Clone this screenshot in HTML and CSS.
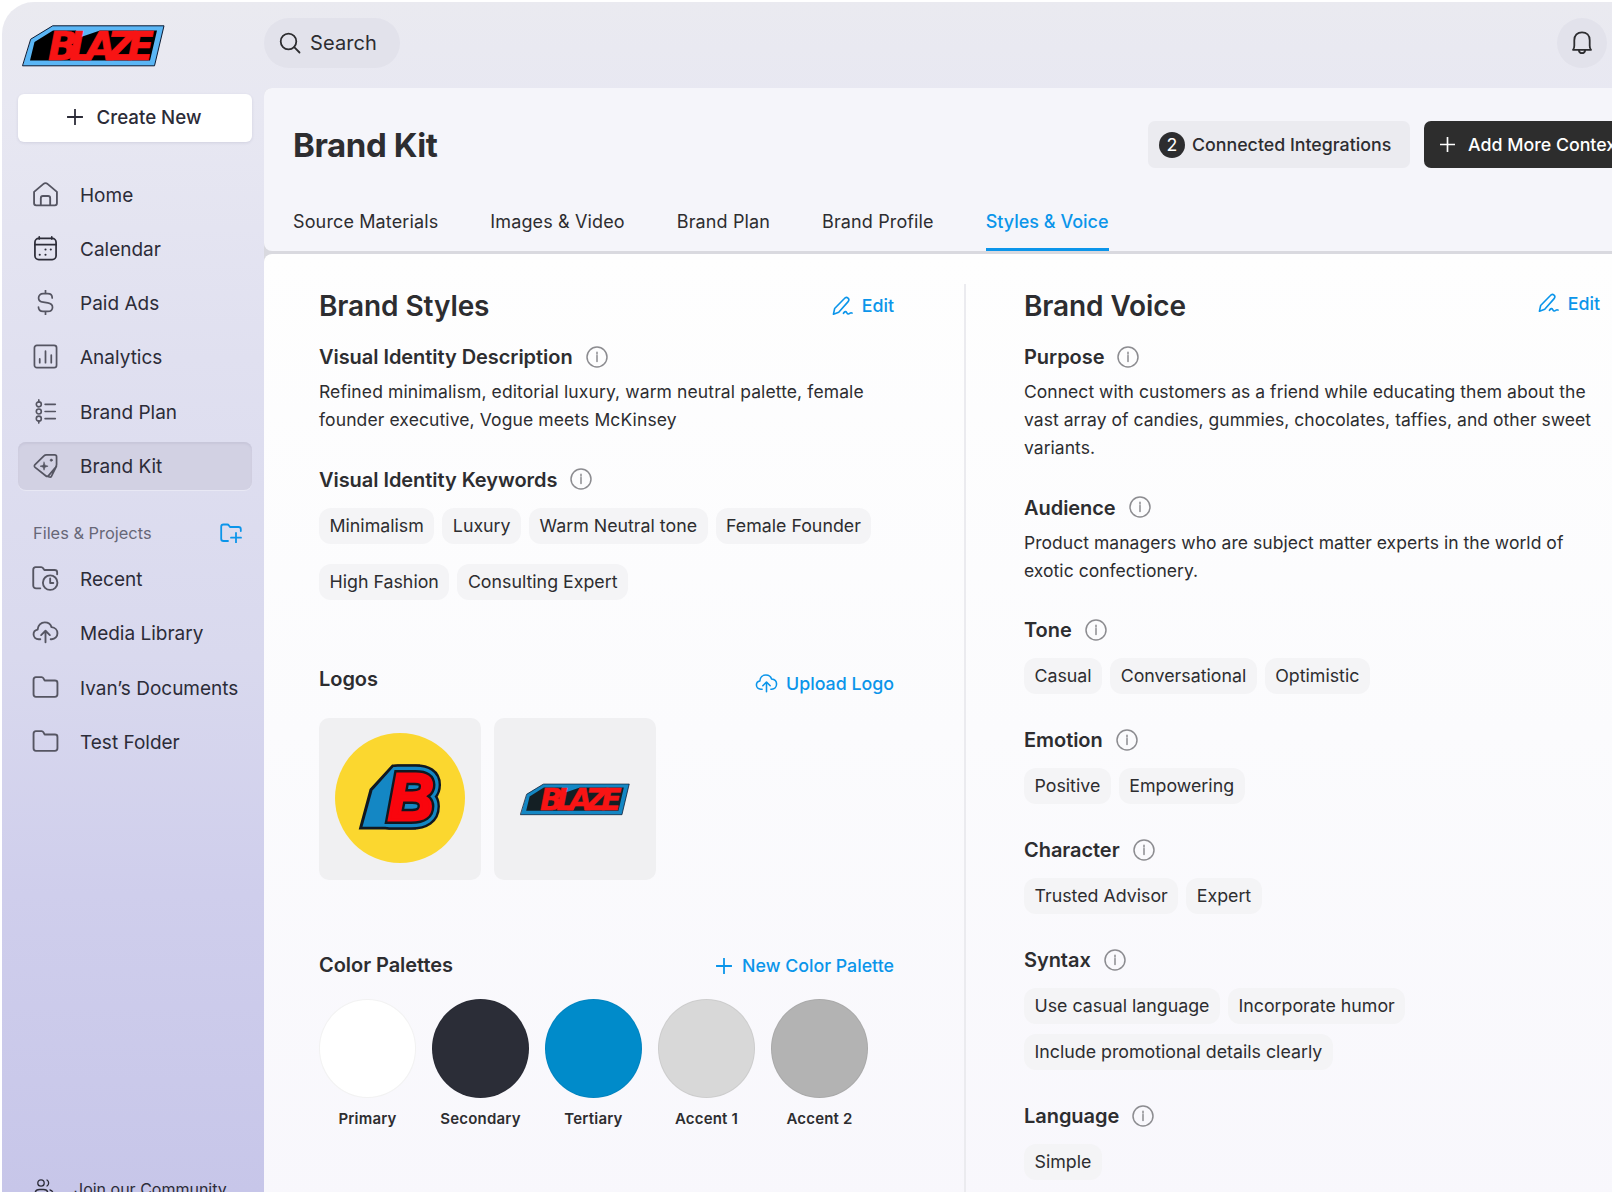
FILE: index.html
```
<!DOCTYPE html>
<html lang="en">
<head>
    <meta charset="UTF-8">
    <meta name="viewport" content="width=device-width, initial-scale=1.0">
    <title>Brand Kit</title>
    <link rel="stylesheet" href="styles.css">
</head>
<body>
    <!-- shared icons -->
    <svg class="sprite" width="0" height="0">
        <symbol id="info" viewBox="0 0 22 22"><circle cx="11" cy="11" r="10" stroke-width="1.5"/><path d="M11 9.6v6M11 6.3v1.6" stroke-width="1.5"/></symbol>
        <symbol id="plus" viewBox="0 0 16 16"><path d="M8 .5v15M.5 8h15"/></symbol>
        <symbol id="edit" viewBox="0 0 24 22"><path d="M1.500 20l1.300-6.200L13.300 3c1.300-1.500 2.900-1.800 4.200-.700 1.200 1.100 1.200 2.700-.100 4.200L7.300 17.800zM12.500 19c1.500-2.200 2.700-2.400 3.600-.800.900 1.700 2 2 3.200 1 .900-.800 1.700-1.200 2.700-.400"/></symbol>
        <symbol id="cloud" viewBox="0 0 26 24"><path d="M8 18.500H6.500C3.500 18.500 1.500 16.300 1.500 13.800c0-2.300 1.500-4.200 3.900-4.600C5.600 5 8.700 2.200 12.300 2.200c3.200 0 5.600 1.700 6.500 4.600 3.300.3 5.700 2.700 5.700 5.900 0 3.200-2.300 5.800-5.500 5.800h-1M13 21.500V10.500M8.800 14.500L13 10.300l4.200 4.200"/></symbol>
        <symbol id="folder" viewBox="0 0 26 24"><path d="M1.500 4.500c0-1.500.8-2.500 2.300-2.500h5.400c.8 0 1.300.3 1.700 1l1.300 2.300h9.800c1.600 0 2.500.8 2.500 2.300v11c0 1.500-.9 2.400-2.500 2.400H3.800c-1.500 0-2.300-.9-2.300-2.400z"/></symbol>
        <symbol id="blaze" viewBox="0 0 143 42">
            <path class="blaze-frame" d="M9 14L30.700.8H142L132.500 40.800H.9z"/>
            <path class="blaze-black" d="M12.500 17L31 5.500h23l5 6.500 19-6.500h57L128 35.500H8z"/>
            <text class="blaze-text" x="26" y="34.500" textLength="106" lengthAdjust="spacing">BLAZE</text>
        </symbol>
    </svg>

    <div class="window">
        <header class="topbar">
            <svg class="brand-logo" viewBox="0 0 143 42"><use href="#blaze"/></svg>
            <div class="search">
                <svg viewBox="0 0 22 22"><circle cx="9.500" cy="9.500" r="7.800"/><path d="M15.200 15.200l5.300 5.300"/></svg>
                <span>Search</span>
            </div>
            <div class="bell">
                <svg viewBox="0 0 20 24"><path d="M1 18.800c1-1 1.300-2.200 1.300-4V9.200C2.300 4.300 5.400 1.300 10 1.300s7.700 3 7.700 7.900v5.600c0 1.800.3 3 1.300 4zM6.800 19.500c.4 1.600 1.600 2.700 3.200 2.700s2.800-1.100 3.200-2.700"/></svg>
            </div>
        </header>

        <aside class="sidebar">
            <button class="create"><svg><use href="#plus"/></svg>Create New</button>
            <ul class="nav">
                <li><svg viewBox="0 0 26 24"><path d="M2 9.500L10.800 2c1.400-1.200 3-1.200 4.400 0L24 9.500v11c0 1.300-.8 2-2 2H4c-1.200 0-2-.7-2-2zM8.500 22.500v-7c0-1.300.7-2 2-2h5c1.300 0 2 .7 2 2v7M13 22.500"/></svg>Home</li>
                <li class="dark"><svg viewBox="0 0 26 26"><rect x="2" y="2.500" width="22" height="22" rx="4"/><path d="M2 9h22M6.500 1v2M19.500 1v2"/><path class="dots" d="M13 14h.01M18.500 14h.01M7 19.500h.01M13 19.500h.01"/></svg>Calendar</li>
                <li><svg viewBox="0 0 26 26"><path d="M13 .5v3.300M13 22.300v3.200M20 8.300c0-2.800-1.700-4.500-4.600-4.500h-4.800C7.700 3.800 5.800 5.500 5.800 8.200c0 2.500 1.700 4 4.800 4.500l4.800.7c3.100.5 4.900 2 4.900 4.500 0 2.700-1.900 4.400-4.900 4.400h-5c-3 0-4.700-1.700-4.700-4.500"/></svg>Paid Ads</li>
                <li><svg viewBox="0 0 26 26"><rect x="1.500" y="1.500" width="23" height="23" rx="2.500"/><path d="M7 15.500v4M13 7.500v12M19 11.500v8"/></svg>Analytics</li>
                <li><svg viewBox="0 0 26 28"><path d="M5.500 1v2.500M5.500 24.500V27M12.500 6H24M12.500 14H24M12.500 22H24"/><circle cx="5.500" cy="6" r="2.800"/><circle cx="5.500" cy="14" r="2.800"/><circle cx="5.500" cy="22" r="2.800"/></svg>Brand Plan</li>
                <li class="active"><svg viewBox="0 0 26 26"><path d="M14 2h8.500c1.200 0 2 .8 2 2v8c0 1.200-.3 1.900-1 2.800l-7.300 8.700c-.8 1-2 1-3 .2L2.200 15c-1-.9-1-2-.1-3l9-8.700c.9-.9 1.700-1.300 2.900-1.300zM24.300 14L19 24.500c-.4.8-1 .8-2.800.2"/><circle class="fill" cx="19" cy="7.500" r="1.200"/><path class="fill" d="M11.500 9.500l1 3.200 3.200 1-3.200 1-1 3.200-1-3.200-3.200-1 3.200-1z"/></svg>Brand Kit</li>
            </ul>
            <div class="files-title">
                <span>Files &amp; Projects</span>
                <svg viewBox="0 0 22 20"><path d="M8 18H3.500C2 18 1.200 17 1.200 15.700V3.800C1.200 2.300 2 1.500 3.500 1.500h3.800c.8 0 1.200.3 1.600.9L10 4h8.500c1.500 0 2.300.7 2.300 2.200V8M16 10v9.500M11 14.700h10"/></svg>
            </div>
            <ul class="nav">
                <li><svg viewBox="0 0 26 24"><path d="M8 21.500H4c-1.700 0-2.800-1-2.800-2.700V3.500c0-1.500.8-2.500 2.300-2.500h5.400c.8 0 1.300.3 1.700 1l1.300 1.800h9.800c1.600 0 2.500.8 2.500 2.300V8"/><circle cx="17.500" cy="16" r="7"/><path d="M17.500 12v4.300h3"/></svg>Recent</li>
                <li><svg><use href="#cloud"/></svg>Media Library</li>
                <li><svg><use href="#folder"/></svg>Ivan’s Documents</li>
                <li><svg><use href="#folder"/></svg>Test Folder</li>
            </ul>
            <div class="community">
                <svg viewBox="0 0 20 20"><circle cx="7" cy="4" r="3.200"/><path d="M13 1c2.200 1.300 2.200 4.700 0 6M1 18v-3c0-3 1.500-4.500 4.500-4.500h4c3 0 4.500 1.500 4.500 4.500v3zM16 11c2 .4 3 2 3 4v3"/></svg>
                Join our Community
            </div>
        </aside>

        <main class="content">
            <div class="page-head">
                <div class="title-row">
                    <h1>Brand Kit</h1>
                    <button class="connected"><span class="count">2</span>Connected Integrations</button>
                    <button class="add"><svg><use href="#plus"/></svg>Add More Context</button>
                </div>
                <nav class="tabs">
                    <a>Source Materials</a>
                    <a>Images &amp; Video</a>
                    <a>Brand Plan</a>
                    <a>Brand Profile</a>
                    <a class="current">Styles &amp; Voice</a>
                </nav>
            </div>

            <div class="columns">
                <section class="styles-col">
                    <div class="col-head">
                        <h2>Brand Styles</h2>
                        <a class="link"><svg class="i-edit"><use href="#edit"/></svg>Edit</a>
                    </div>
                    <div class="group">
                        <h3>Visual Identity Description <svg><use href="#info"/></svg></h3>
                        <p>Refined minimalism, editorial luxury, warm neutral palette, female<br>founder executive, Vogue meets McKinsey</p>
                    </div>
                    <div class="group">
                        <h3>Visual Identity Keywords <svg><use href="#info"/></svg></h3>
                        <div class="chips roomy">
                            <span>Minimalism</span><span>Luxury</span><span>Warm Neutral tone</span><span>Female Founder</span>
                            <span>High Fashion</span><span>Consulting Expert</span>
                        </div>
                    </div>
                    <div class="logos-head">
                        <h3>Logos</h3>
                        <a class="link"><svg class="i-cloud"><use href="#cloud"/></svg>Upload Logo</a>
                    </div>
                    <div class="logos">
                        <div class="tile">
                            <svg class="b-logo" viewBox="0 0 130 130">
                                <circle cx="65" cy="65" r="65"/>
                                <path class="b-side" d="M25 95.500L35.500 56.500 57.500 32.500H84L80 95.500z"/>
                                <text class="b-outer" x="53" y="86.500" textLength="46" lengthAdjust="spacingAndGlyphs">B</text>
                                <path class="b-blue" d="M27.500 93.800L37.500 57.500 58.500 34H84L76 93.800z"/>
                                <text class="b-mid" x="53" y="86.500" textLength="46" lengthAdjust="spacingAndGlyphs">B</text>
                                <text class="b-line" x="53" y="86.500" textLength="46" lengthAdjust="spacingAndGlyphs">B</text>
                                <text class="b-red" x="53" y="86.500" textLength="46" lengthAdjust="spacingAndGlyphs">B</text>
                            </svg>
                        </div>
                        <div class="tile"><svg class="tile-blaze" viewBox="0 0 143 42"><use href="#blaze"/></svg></div>
                    </div>
                    <div class="palette-head">
                        <h3>Color Palettes</h3>
                        <a class="link"><svg class="i-plus"><use href="#plus"/></svg>New Color Palette</a>
                    </div>
                    <div class="palette">
                        <div class="swatch primary">Primary</div>
                        <div class="swatch secondary">Secondary</div>
                        <div class="swatch tertiary">Tertiary</div>
                        <div class="swatch accent1">Accent 1</div>
                        <div class="swatch accent2">Accent 2</div>
                    </div>
                </section>

                <section class="voice-col">
                    <div class="col-head">
                        <h2>Brand Voice</h2>
                        <a class="link"><svg class="i-edit"><use href="#edit"/></svg>Edit</a>
                    </div>
                    <div class="group">
                        <h3>Purpose <svg><use href="#info"/></svg></h3>
                        <p>Connect with customers as a friend while educating them about the<br>vast array of candies, gummies, chocolates, taffies, and other sweet<br>variants.</p>
                    </div>
                    <div class="group">
                        <h3>Audience <svg><use href="#info"/></svg></h3>
                        <p>Product managers who are subject matter experts in the world of<br>exotic confectionery.</p>
                    </div>
                    <div class="group">
                        <h3>Tone <svg><use href="#info"/></svg></h3>
                        <div class="chips"><span>Casual</span><span>Conversational</span><span>Optimistic</span></div>
                    </div>
                    <div class="group">
                        <h3>Emotion <svg><use href="#info"/></svg></h3>
                        <div class="chips"><span>Positive</span><span>Empowering</span></div>
                    </div>
                    <div class="group">
                        <h3>Character <svg><use href="#info"/></svg></h3>
                        <div class="chips"><span>Trusted Advisor</span><span>Expert</span></div>
                    </div>
                    <div class="group">
                        <h3>Syntax <svg><use href="#info"/></svg></h3>
                        <div class="chips"><span>Use casual language</span><span>Incorporate humor</span><span>Include promotional details clearly</span></div>
                    </div>
                    <div class="group">
                        <h3>Language <svg><use href="#info"/></svg></h3>
                        <div class="chips"><span>Simple</span></div>
                    </div>
                </section>
            </div>
        </main>
    </div>
</body>
</html>
```
FILE: styles.css
```
* {
    margin: 0;
    padding: 0;
    box-sizing: border-box;
}
body {
    font-family: Inter, "Liberation Sans", sans-serif;
    color: #2d2d30;
    background: #fff;
    height: 1192px;
    overflow: hidden;
}
svg {
    fill: none;
    stroke: currentColor;
    stroke-width: 1.8;
    stroke-linecap: round;
    stroke-linejoin: round;
    flex-shrink: 0;
}
button {
    font: inherit;
    color: inherit;
    border: none;
}
ul {
    list-style: none;
}
.sprite {
    position: absolute;
}
.window {
    display: grid;
    grid-template: 86px 1104px / 262px 1fr;
    width: 1680px;
    margin: 2px 0 0 2px;
    border-radius: 32px 0 0 0;
    overflow: hidden;
    background: linear-gradient(#eaeaf0 0, #e8e8f2 8%, #e0e0f0 30%, #d9d9ee 55%, #cfceec 75%, #c7c6e9 100%);
}

/* top bar */
.topbar {
    grid-column: 1 / 3;
    display: flex;
    align-items: center;
    padding: 0 75px 4px 20px;
}
.brand-logo {
    width: 143px;
    height: 42px;
    margin-top: 5px;
}
.blaze-frame {
    fill: var(--frame, #5ab6f5);
    stroke: #0b1a33;
    stroke-width: 1;
}
.blaze-black {
    fill: var(--shade, #000);
    stroke: none;
}
.blaze-text {
    font: italic 700 39px "DejaVu Sans", sans-serif;
    fill: #f81414;
    stroke: #f81414;
    stroke-width: 0.6;
}
.search {
    display: flex;
    align-items: center;
    gap: 9px;
    width: 136px;
    height: 50px;
    margin-left: 99px;
    padding-left: 15px;
    border-radius: 25px;
    background: #e2e2eb;
    font-size: 20px;
    letter-spacing: 0.1px;
}
.search svg {
    width: 22px;
    height: 22px;
}
.bell {
    display: grid;
    place-items: center;
    width: 50px;
    height: 50px;
    margin-left: auto;
    border-radius: 50%;
    background: #e2e2eb;
}
.bell svg {
    width: 20px;
    height: 24px;
}

/* sidebar */
.sidebar {
    padding: 6px 12px 0 16px;
    color: #2c2c38;
}
.create {
    display: flex;
    align-items: center;
    justify-content: center;
    gap: 14px;
    width: 234px;
    height: 48px;
    margin-bottom: 29px;
    padding: 0 2px 2px 0;
    border-radius: 6px;
    background: #fff;
    box-shadow: 0 1px 3px rgba(60, 60, 100, 0.12);
    font-size: 18.7px;
    font-weight: 500;
}
.create svg {
    width: 16px;
    height: 16px;
}
.nav li {
    display: flex;
    align-items: center;
    gap: 21px;
    height: 48px;
    margin-bottom: 6.3px;
    padding-left: 14px;
    border-radius: 8px;
    font-size: 19px;
    white-space: nowrap;
}
.nav svg {
    width: 27px;
    height: 25px;
    margin-top: -2px;
    color: #555562;
}
.nav .dark svg {
    color: #2c2c38;
}
.nav .dots {
    stroke-width: 2.2;
}
.nav .fill {
    fill: currentColor;
    stroke-width: 0.6;
}
.nav .active {
    background: #d2d1e3;
    box-shadow: inset 0 2px 2px #c8c7da, 0 1px 0 #e8e8f4;
}
.files-title {
    display: flex;
    align-items: center;
    justify-content: space-between;
    height: 24px;
    margin: 31px 10px 10px 15px;
    color: #676777;
    font-size: 16.4px;
}
.files-title svg {
    width: 22px;
    height: 20px;
    color: #0b95ea;
}
.community {
    display: flex;
    align-items: center;
    gap: 20px;
    margin-top: 413px;
    padding-left: 16px;
    font-size: 16px;
    white-space: nowrap;
}
.community svg {
    width: 20px;
    height: 20px;
    stroke-width: 1.3;
}

/* page header */
.content {
    display: flex;
    flex-direction: column;
    background: #d9d9df;
    border-radius: 8px 0 0 0;
    overflow: hidden;
}
.page-head {
    height: 163px;
    padding-left: 29px;
    background: #f5f5fa;
    border-radius: 0 0 0 8px;
}
.title-row {
    display: flex;
    align-items: center;
    height: 113px;
}
h1 {
    width: 855px;
    font-size: 33px;
    font-weight: 700;
    letter-spacing: -0.4px;
}
.connected,
.add {
    display: flex;
    align-items: center;
    height: 47px;
    border-radius: 7px;
    background: #ebebf0;
    font-size: 17.8px;
    font-weight: 500;
    white-space: nowrap;
}
.connected {
    width: 262px;
    padding-left: 11px;
    gap: 7px;
}
.count {
    display: grid;
    place-items: center;
    width: 26px;
    height: 26px;
    border-radius: 50%;
    background: #2d2d2f;
    color: #fff;
    font-weight: 400;
}
.add {
    width: 230px;
    margin-left: 14px;
    padding-left: 16px;
    gap: 13px;
    background: #2d2d2d;
    color: #fff;
}
.add svg {
    width: 15px;
    height: 15px;
}
.tabs {
    display: flex;
    gap: 52px;
    height: 50px;
}
.tabs a {
    padding-top: 10px;
    font-size: 18px;
    letter-spacing: 0.13px;
    white-space: nowrap;
}
.tabs .current {
    border-bottom: 3px solid #0b95ea;
    color: #0b95ea;
    font-weight: 500;
    letter-spacing: 0;
}

/* brand kit columns */
.columns {
    display: flex;
    flex: 1;
    margin-top: 3px;
    padding: 30px 0 0 55px;
    border-radius: 8px 0 0 0;
    background: linear-gradient(#fefefe, #fbfbfd 50%, #f8f7fc);
}
.styles-col {
    width: 647px;
    padding-right: 70px;
    border-right: 2px solid #ebebef;
}
.voice-col {
    width: 634px;
    padding-left: 58px;
}
.col-head {
    display: flex;
    justify-content: space-between;
    height: 59px;
    padding-top: 4px;
}
h2 {
    font-size: 28px;
    font-weight: 600;
    letter-spacing: -0.1px;
    line-height: 36px;
}
.link {
    display: flex;
    align-items: center;
    gap: 8px;
    height: 35px;
    color: #0b95ea;
    font-size: 17.8px;
    font-weight: 500;
}
.voice-col .link {
    height: 30px;
}
.i-edit {
    width: 22px;
    height: 20px;
}
.i-cloud {
    width: 23px;
    height: 21px;
}
.i-plus {
    width: 16px;
    height: 16px;
    margin-right: 2px;
}
.group {
    margin-bottom: 31.5px;
}
h3 {
    display: flex;
    align-items: center;
    gap: 13px;
    height: 28px;
    font-size: 20px;
    font-weight: 600;
    letter-spacing: -0.05px;
}
h3 svg {
    width: 22px;
    height: 22px;
    margin-top: -1px;
    color: #8c8c90;
}
.group p {
    margin-top: 7px;
    font-size: 17.5px;
    letter-spacing: 0.04px;
    line-height: 28px;
    white-space: nowrap;
}
.styles-col p {
    letter-spacing: 0.11px;
}
.chips {
    display: flex;
    flex-wrap: wrap;
    gap: 10px 8px;
    margin-top: 14px;
    padding-bottom: 0.5px;
}
.chips span {
    height: 36px;
    padding: 0 10.5px;
    border-radius: 12px;
    background: #f4f4f6;
    font-size: 17.8px;
    line-height: 36px;
    white-space: nowrap;
}
.roomy {
    row-gap: 20px;
}
.logos-head,
.palette-head {
    display: flex;
    justify-content: space-between;
    height: 53px;
    margin-top: 65px;
}
.logos-head .link {
    margin-top: 1px;
}
.logos {
    display: flex;
    gap: 13px;
}
.tile {
    display: grid;
    place-items: center;
    width: 162px;
    height: 162px;
    border-radius: 10px;
    background: #f0f0f2;
}
.b-logo {
    width: 130px;
    height: 130px;
    margin-top: -2px;
    font: italic 700 66px "Liberation Sans", sans-serif;
    stroke-linejoin: miter;
}
.b-logo circle {
    fill: #fbd72f;
    stroke: none;
}
.b-side {
    fill: #101820;
    stroke: #101820;
    stroke-width: 2;
}
.b-outer {
    stroke: #101820;
    stroke-width: 19.5;
    stroke-linejoin: round;
}
.b-blue {
    fill: #1487c4;
    stroke: none;
}
.b-mid {
    stroke: #1487c4;
    stroke-width: 14.5;
    stroke-linejoin: round;
}
.b-line {
    fill: #1487c4;
    stroke: #101820;
    stroke-width: 8;
}
.b-red {
    fill: #f9050d;
    stroke: #f9050d;
    stroke-width: 3;
}
.tile-blaze {
    --frame: #1487c4;
    --shade: #141f24;
    width: 110px;
    height: 33px;
}
.palette-head {
    height: 48px;
    margin-top: 71px;
}
.palette-head .link {
    margin-top: -3px;
}
.palette {
    display: flex;
    gap: 16px;
}
.swatch {
    width: 97px;
    font-size: 15px;
    font-weight: 600;
    letter-spacing: 0.2px;
    text-align: center;
}
.swatch::before {
    content: "";
    display: block;
    height: 97px;
    margin-bottom: 11px;
    border: 1px solid rgba(0, 0, 0, 0.05);
    border-radius: 50%;
    background: #fff;
}
.secondary::before {
    background: #2b2d37;
}
.tertiary::before {
    background: #008bca;
}
.accent1::before {
    background: #d8d8d8;
}
.accent2::before {
    background: #b3b3b3;
}
```
